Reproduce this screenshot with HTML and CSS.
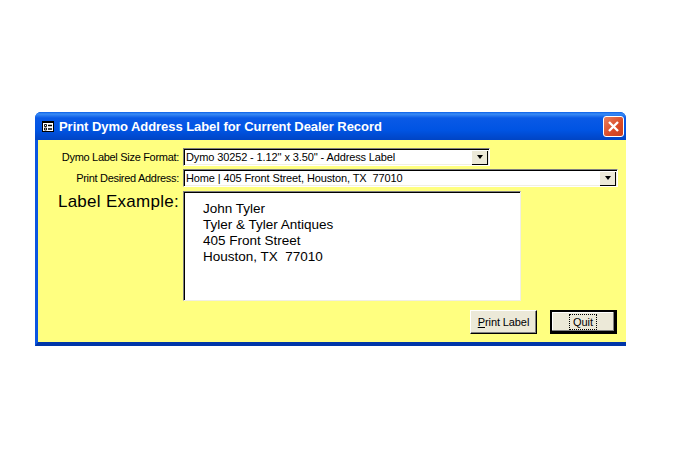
FILE: index.html
```html
<!DOCTYPE html>
<html lang="en">
<head>
    <meta charset="UTF-8">
    <meta name="viewport" content="width=device-width, initial-scale=1.0">
    <title>Print Dymo Address Label</title>
    <link rel="stylesheet" href="styles.css">
</head>
<body>

    <div class="window">
        <div class="titlebar">
            <svg class="form-icon" width="12" height="11" viewBox="0 0 12 11">
                <rect x="0.5" y="0.5" width="11" height="10" fill="#fff" stroke="#000"/>
                <rect x="0" y="0" width="12" height="2" fill="#000"/>
                <path d="M2.5 3.5h2v2h-2zM2.5 7h2v2h-2z" fill="none" stroke="#000" stroke-width="0.9"/>
                <path d="M6 4.5h4M6 8h4" stroke="#000" stroke-width="1.4"/>
            </svg>
            <span class="title">Print Dymo Address Label for Current Dealer Record</span>
            <div class="close">
                <svg width="13" height="13" viewBox="0 0 13 13">
                    <path d="M2 2l9 9M11 2l-9 9" stroke="#fff" stroke-width="2.4"/>
                </svg>
            </div>
        </div>
        <div class="client">
            <div class="row">
                <label class="field-label">Dymo Label Size Format:</label>
                <div class="combo combo-short">
                    <span class="combo-text">Dymo 30252 - 1.12'' x 3.50'' - Address Label</span>
                    <span class="combo-btn"><i class="arrow"></i></span>
                </div>
            </div>
            <div class="row">
                <label class="field-label">Print Desired Address:</label>
                <div class="combo combo-long">
                    <span class="combo-text">Home | 405 Front Street, Houston, TX&nbsp; 77010</span>
                    <span class="combo-btn"><i class="arrow"></i></span>
                </div>
            </div>
            <div class="row row-example">
                <label class="field-label big-label">Label Example:</label>
                <div class="label-box">
                    <div>John Tyler</div>
                    <div>Tyler &amp; Tyler Antiques</div>
                    <div>405 Front Street</div>
                    <div>Houston, TX&nbsp; 77010</div>
                </div>
            </div>
            <div class="buttons">
                <button class="btn"><u>P</u>rint Label</button>
                <button class="btn btn-default"><span class="focus">Quit</span></button>
            </div>
        </div>
    </div>

</body>
</html>
```

FILE: styles.css
```css
body {
    margin: 0;
    padding: 112px 0 0 35px;
    background-color: #fff;
    font-family: "Liberation Sans", Arial, sans-serif;
    font-size: 11px;
    color: #000;
}
.window {
    width: 591px;
    height: 234px;
    box-sizing: border-box;
    display: flex;
    flex-direction: column;
    background-color: #0a50d8;
    border-bottom: 4px solid #0036a8;
    border-left: 3px solid #0a55e0;
    border-radius: 6px 6px 0 0;
}
.titlebar {
    height: 28px;
    margin-left: -3px;
    padding: 0 2px 0 7px;
    display: flex;
    align-items: center;
    border-radius: 6px 6px 0 0;
    background: linear-gradient(#0a5fe8 0, #3a8cf5 2px, #0a5ae6 6px, #0054e3 18px, #0044c4 28px);
}
.form-icon {
    flex: none;
}
.title {
    margin-left: 5px;
    flex: 1;
    color: #fff;
    font-weight: bold;
    font-size: 13px;
    letter-spacing: -0.05px;
}
.close {
    width: 21px;
    height: 21px;
    box-sizing: border-box;
    display: flex;
    justify-content: center;
    align-items: center;
    background: linear-gradient(135deg, #e8805f, #da4a26 60%, #c9401f);
    border: 1px solid #fff;
    border-radius: 3px;
}
.client {
    flex: 1;
    padding-top: 8px;
    background-color: #ffff80;
}
.row {
    display: flex;
    align-items: center;
    margin-bottom: 3px;
}
.field-label {
    width: 141px;
    margin-right: 4px;
    text-align: right;
    letter-spacing: -0.3px;
}
.combo {
    height: 18px;
    box-sizing: border-box;
    display: flex;
    align-items: center;
    justify-content: space-between;
    background-color: #fff;
    border: 1px solid;
    border-color: #808080 #fff #fff #808080;
    box-shadow: inset 1px 1px 0 #000, inset -1px -1px 0 #f1efe2;
}
.combo-short {
    width: 307px;
}
.combo-long {
    width: 435px;
}
.combo-text {
    padding-left: 2px;
    white-space: nowrap;
    letter-spacing: -0.12px;
}
.combo-btn {
    width: 16px;
    height: 14px;
    margin: 1px 1px 0 0;
    box-sizing: border-box;
    display: flex;
    justify-content: center;
    align-items: center;
    background-color: #ece9d8;
    border-right: 1px solid #000;
    border-bottom: 1px solid #000;
}
.arrow {
    width: 0;
    height: 0;
    border-style: solid;
    border-width: 4px 3.5px 0;
    border-color: #000 transparent transparent;
}
.row-example {
    align-items: flex-start;
    margin-top: 4px;
    margin-bottom: 0;
}
.big-label {
    font-size: 17px;
    letter-spacing: 0.28px;
    line-height: 22px;
}
.label-box {
    width: 338px;
    height: 110px;
    box-sizing: border-box;
    padding: 9px 0 0 19px;
    background-color: #fff;
    border: 1px solid;
    border-color: #808080 #f1efe2 #f1efe2 #808080;
    box-shadow: inset 1px 1px 0 #000;
    font-size: 13.5px;
    line-height: 16px;
}
.buttons {
    display: flex;
    justify-content: flex-end;
    gap: 13px;
    margin: 9px 9px 0 0;
}
.btn {
    width: 67px;
    height: 24px;
    padding: 0;
    font-family: inherit;
    font-size: 11px;
    letter-spacing: -0.1px;
    color: #000;
    background-color: #ece9d8;
    border: 1px solid;
    border-color: #fff #000 #000 #fff;
    box-shadow: inset -1px -1px 0 #808080;
}
.btn-default {
    border-width: 2px 3px 3px 2px;
    border-color: #000;
    box-shadow: inset -1px -1px 0 #808080, inset 1px 1px 0 #fff;
}
.focus {
    padding: 1px 3px;
    border: 1px dotted #000;
}
```
